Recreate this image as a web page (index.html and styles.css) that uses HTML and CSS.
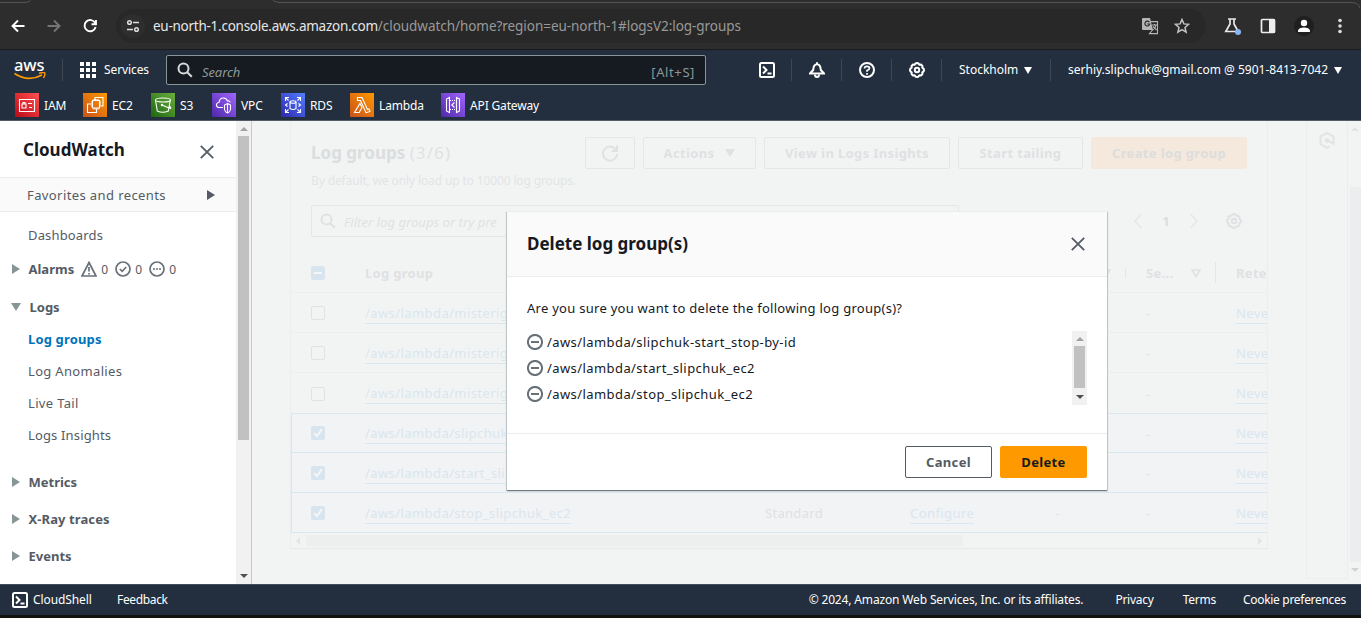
FILE: index.html
```html
<!DOCTYPE html>
<html lang="en">
<head>
<meta charset="utf-8">
<title>CloudWatch</title>
<link rel="stylesheet" href="styles.css">
</head>
<body>
<svg class="defs" aria-hidden="true">
  <symbol id="shell" viewBox="0 0 16 16"><rect x="1" y="1" width="14" height="14" rx="1.5"/><path d="M4 4.500 7.500 8 4 11.500M8.500 11.500h4"/></symbol>
  <symbol id="gear" viewBox="0 0 16 16"><path d="M6.600 1.400 8 1l1.400.4 1 1.300 1.600-.1 1.400 1.400-.1 1.600 1.300 1L15 8l-.4 1.400-1.300 1 .1 1.600-1.400 1.400-1.600-.1-1 1.300L8 15l-1.400-.4-1-1.300-1.600.1L2.600 12l.1-1.600-1.300-1L1 8l.4-1.400 1.300-1L2.600 4 4 2.600l1.600.1z"/><circle cx="8" cy="8" r="2.200"/></symbol>
  <symbol id="find" viewBox="0 0 16 16"><circle cx="6.500" cy="6.500" r="5"/><path d="m10.200 10.200 4.600 4.600"/></symbol>
  <symbol id="x" viewBox="0 0 14 14"><path d="M.8.8 13.200 13.200M13.200.8.8 13.200"/></symbol>
  <symbol id="tick" viewBox="0 0 14 14"><rect width="14" height="14" rx="2" fill="currentColor" stroke="none"/><path d="m3 7.300 3 2.900 5-7" stroke="#f4f6f7"/></symbol>
  <symbol id="minus" viewBox="0 0 16 16"><circle cx="8" cy="8" r="7.100"/><path d="M4 8h8"/></symbol>
</svg>

<header class="chrome">
  <svg class="tabline" width="1361" height="10"><path d="M0 2.500h24q7 0 7-4M272-1q2 3.500 7 3.500h1072q8 0 9 6" fill="none" stroke="#555"/></svg>
  <div class="navbtns">
    <svg width="16" height="16" viewBox="0 0 16 16" class="ln white"><path d="M14.500 8H3M8 2.500 2.500 8 8 13.500"/></svg>
    <svg width="16" height="16" viewBox="0 0 16 16" class="ln dim"><path d="M1.500 8H13M8 2.500 13.500 8 8 13.500"/></svg>
    <svg width="16" height="16" viewBox="0 0 16 16" class="ln white"><path d="M13.200 5.200A5.600 5.600 0 1 0 13.600 9M14 2v4.300H9.500"/></svg>
  </div>
  <div class="omni">
    <span class="tune"><svg width="14" height="14" viewBox="0 0 14 14" class="ln15 lt"><circle cx="3.500" cy="3.500" r="1.800"/><path d="M7 3.500h6M1 10.500h6"/><circle cx="10.500" cy="10.500" r="1.800"/></svg></span>
    <span class="url"><span class="domain">eu-north-1.console.aws.amazon.com</span><span class="path">/cloudwatch/home?region=eu-north-1#logsV2:log-groups</span></span>
    <svg class="translate" width="18" height="18" viewBox="0 0 18 18"><path d="M2 1h7l3 12H2a1 1 0 0 1-1-1V2a1 1 0 0 1 1-1z" fill="#b5b5b5"/><path d="M8.300 5.200A2.400 2.400 0 1 0 8.700 7H6.300" fill="none" stroke="#282828" stroke-width="1.200"/><path d="M10 4.600h6.500v12H8.500L11.500 13M11 8h5M13.500 7v1M15 8q-.5 3-3.500 5M12 9.500l3.500 3.500" fill="none" stroke="#b5b5b5" stroke-width="1.100"/></svg>
    <svg class="star" width="16" height="16" viewBox="0 0 16 16"><path d="m8 1.500 1.900 4.400 4.700.4-3.600 3.200 1.100 4.700L8 11.700l-4.100 2.500L5 9.500 1.400 6.300l4.700-.4z" fill="none" stroke="#c4c4c4" stroke-width="1.500"/></svg>
  </div>
  <div class="ext">
    <svg width="18" height="18" viewBox="0 0 18 18"><path d="M4 2h8M6 2v5L1.800 14.500h12.400L10 7V2" fill="none" stroke="#e8e8e8" stroke-width="1.700"/><circle cx="14" cy="15" r="3" fill="#8ab4f8"/></svg>
    <svg width="16" height="16" viewBox="0 0 16 16"><rect x="1.500" y="1.500" width="13" height="13" rx="1" fill="none" stroke="#eee" stroke-width="1.700"/><path d="M9 1.500h6v13H9z" fill="#eee"/></svg>
    <svg width="20" height="20" viewBox="0 0 20 20"><circle cx="10" cy="10" r="10" fill="#1f1f1f"/><circle cx="10" cy="7" r="3.200" fill="#fff"/><path d="M4 16v-1.500Q5 11.500 10 11.500t6 3V16z" fill="#fff"/></svg>
    <svg width="6" height="16" viewBox="0 0 6 16" fill="#ddd"><circle cx="3" cy="2.500" r="1.800"/><circle cx="3" cy="8" r="1.800"/><circle cx="3" cy="13.500" r="1.800"/></svg>
  </div>
</header>

<nav class="aws">
  <div class="top">
    <div class="logo"><span>aws</span><svg width="32" height="9" viewBox="0 0 32 9"><path d="M.5 1.500Q14 10.500 28 3" fill="none" stroke="#f90" stroke-width="1.800"/><path d="M25 1.200q5-1.200 5.800-.2t-1.300 5" fill="none" stroke="#f90" stroke-width="1.400"/></svg></div>
    <div class="services"><svg width="16" height="16" fill="#fff"><path d="M0 0h4v4H0zM6 0h4v4H6zM12 0h4v4h-4zM0 6h4v4H0zM6 6h4v4H6zM12 6h4v4h-4zM0 12h4v4H0zM6 12h4v4H6zM12 12h4v4h-4z"/></svg><span>Services</span></div>
    <div class="search"><svg width="16" height="16" class="ln"><use href="#find"/></svg><i>Search</i><span class="alt">[Alt+S]</span></div>
    <div class="tools">
      <span class="cell"><svg width="16" height="16" class="ln white"><use href="#shell"/></svg></span>
      <span class="cell"><svg width="16" height="16" viewBox="0 0 16 16" class="ln white"><path d="M1 11.500h14L11.800 8Q11.500 2.200 8 2.200T4.200 8zM8 .2v2"/><path d="M6 12.500q0 2.500 2 2.500t2-2.500"/></svg></span>
      <span class="cell"><svg width="16" height="16" viewBox="0 0 16 16" class="ln white"><circle cx="8" cy="8" r="7"/><path d="M5.500 6.500Q5.500 4.300 8 4.300t2.500 2Q10.500 7.500 8 8.500v1.200M8 11v1.700" stroke-width="1.700"/></svg></span>
      <span class="cell"><svg width="16" height="16" class="ln white"><use href="#gear"/></svg></span>
      <span class="region">Stockholm<b class="tri"></b></span>
      <span class="account">serhiy.slipchuk@gmail.com @ 5901-8413-7042<b class="tri"></b></span>
    </div>
  </div>
  <div class="favs">
    <span class="fav w68"><svg class="red" viewBox="0 0 24 24"><path d="M4.500 6.500h15v12h-15zM7 11h4v4H7zM8 11V9.500h2V11M13 10.500h4M14 14.500h3"/></svg><span>IAM</span></span>
    <span class="fav w68"><svg class="orange" viewBox="0 0 24 24"><path d="M8.500 11H4.500v8.500h9V16M12 7V4.500h8V13h-3M9.500 7.500h7v7.500h-7zM11 6v1.500M13 6v1.500M15 6v1.500M11 15v1.500M13 15v1.500M15 15v1.500M8 9h1.500M8 11h1.500M8 13h1.500M16.500 9H18M16.500 11H18"/></svg><span>EC2</span></span>
    <span class="fav w61"><svg class="green" viewBox="0 0 24 24"><ellipse cx="12" cy="7" rx="7.500" ry="2"/><path d="m4.500 7 1.800 11q5.500 2.500 11 0l2-11M11 12l7.500 3.300q3 .6-.5-2.300"/><circle cx="11" cy="12" r=".7"/></svg><span>S3</span></span>
    <span class="fav w69"><svg class="purple" viewBox="0 0 24 24"><path d="M11 14.500H6.500Q4 13.500 4.500 11.300 5.200 9.500 7 9.500 7.500 5 11.500 5q3 0 4 3 2.500-.5 2.700 1.500M15.500 10.500l3 1.500v4.500q-.5 2.500-3 3.500-2.500-1-3-3.500V12zM15.500 10.500V20"/></svg><span>VPC</span></span>
    <span class="fav w69"><svg class="blue" viewBox="0 0 24 24"><ellipse cx="12" cy="9" rx="3" ry="1.200"/><path d="M9 9v6.500q3 2 6 0V9M4.500 8V4.500H8M4.500 4.500l3 3M16 4.500h3.500V8M19.500 4.500l-3 3M4.500 16v3.500H8M4.500 19.500l3-3M16 19.500h3.500V16M19.500 19.500l-3-3M6.500 10.500 4.500 12l2 1.500M17.500 10.500l2 1.500-2 1.500"/></svg><span>RDS</span></span>
    <span class="fav w91"><svg class="orange" viewBox="0 0 24 24"><path d="M7.500 4.500H12l5.500 12 1.500-.5 1 2.500-4 1.200L10.500 7.500H7.500zM10 10.500l2 4-2.800 5H4.500z"/></svg><span>Lambda</span></span>
    <span class="fav"><svg class="purple" viewBox="0 0 24 24"><path d="m8.500 4.500-3 1.500v12l3 1.500zM15.500 4.500l3 1.500v12l-3 1.500zM13.500 9.500 10.800 12l2.700 2.500"/><path d="M9 7.500h6M9 16.500h6" stroke-dasharray="1 1"/></svg><span>API Gateway</span></span>
  </div>
</nav>

<div class="body">
  <aside class="side">
    <div class="sidehead"><h2>CloudWatch</h2><svg width="14" height="14" class="ln ink"><use href="#x"/></svg></div>
    <div class="favrow"><span>Favorites and recents</span><b class="rt dark"></b></div>
    <div class="item dash">Dashboards</div>
    <div class="item head alarms"><b class="rt"></b><span>Alarms</span>
      <svg width="16" height="16" viewBox="0 0 16 16" class="ln16"><path d="M8 1.500 15 15H1zM8 6v4.500M8 12v1.500"/></svg><em>0</em>
      <svg width="16" height="16" viewBox="0 0 16 16" class="ln16"><circle cx="8" cy="8" r="7"/><path d="m4.800 8 2.400 2.300 4-4.300"/></svg><em>0</em>
      <svg width="16" height="16" viewBox="0 0 16 16" class="ln16"><circle cx="8" cy="8" r="7"/><path d="M4 8h2M7 8h2M10 8h2"/></svg><em>0</em></div>
    <div class="item head logs"><b class="dn"></b><span>Logs</span></div>
    <div class="item active">Log groups</div>
    <div class="item anomalies">Log Anomalies</div>
    <div class="item tail">Live Tail</div>
    <div class="item">Logs Insights</div>
    <div class="item head tall first"><b class="rt"></b><span>Metrics</span></div>
    <div class="item head tall xray"><b class="rt"></b><span>X-Ray traces</span></div>
    <div class="item head tall"><b class="rt"></b><span>Events</span></div>
  </aside>
  <div class="vbar"><b class="up"></b><div class="thumb"></div><b class="down"></b></div>

  <main class="main">
    <section class="panel">
      <div class="phead">
        <div class="ptitle"><h1>Log groups <span>(3/6)</span></h1><p>By default, we only load up to 10000 log groups.</p></div>
        <div class="btns">
          <span class="gbtn refresh"><svg width="18" height="18" viewBox="0 0 18 18" class="ln"><path d="M15 6A7 7 0 1 0 16 10M16 1.500V7h-5.500"/></svg></span>
          <span class="gbtn actions">Actions<b class="tri"></b></span>
          <span class="gbtn view">View in Logs Insights</span>
          <span class="gbtn start">Start tailing</span>
          <span class="gbtn create">Create log group</span>
        </div>
      </div>
      <div class="filters">
        <div class="filter"><svg width="16" height="16" class="ln"><use href="#find"/></svg><i>Filter log groups or try pre</i></div>
        <div class="pager"><svg width="8" height="16" viewBox="0 0 8 16" class="ln15"><path d="M7.500 1 1 8l6.500 7"/></svg><b>1</b><svg width="8" height="16" viewBox="0 0 8 16" class="ln15"><path d="M.5 1 7 8 .5 15"/></svg><svg width="16" height="16" class="ln cog"><use href="#gear"/></svg></div>
      </div>
      <div class="row th"><span class="ck"><svg width="14" height="14" viewBox="0 0 14 14"><rect width="14" height="14" rx="2" fill="#d8e5ee"/><path d="M3 7h8" stroke="#f4f6f7" stroke-width="2"/></svg></span><span>Log group</span><span></span><span></span><span class="dv"><svg width="10" height="9" viewBox="0 0 10 9" class="ln15"><path d="M1 1h8L5 7.500z"/></svg></span><span class="dv">Se...<svg width="10" height="9" viewBox="0 0 10 9" class="ln15"><path d="M1 1h8L5 7.500z"/></svg></span><span>Reter</span></div>
      <div class="row"><span class="ck"><i class="box"></i></span><span><a>/aws/lambda/misterig</a></span><span></span><span></span><span></span><span>-</span><span><a>Never</a></span></div>
      <div class="row"><span class="ck"><i class="box"></i></span><span><a>/aws/lambda/misterig</a></span><span></span><span></span><span></span><span>-</span><span><a>Never</a></span></div>
      <div class="row last"><span class="ck"><i class="box"></i></span><span><a>/aws/lambda/misterig</a></span><span></span><span></span><span></span><span>-</span><span><a>Never</a></span></div>
      <div class="row sel short"><span class="ck"><svg width="14" height="14" class="ln"><use href="#tick"/></svg></span><span><a>/aws/lambda/slipchuk</a></span><span></span><span></span><span></span><span>-</span><span><a>Never</a></span></div>
      <div class="row sel"><span class="ck"><svg width="14" height="14" class="ln"><use href="#tick"/></svg></span><span><a>/aws/lambda/start_slip</a></span><span></span><span></span><span></span><span>-</span><span><a>Never</a></span></div>
      <div class="row sel"><span class="ck"><svg width="14" height="14" class="ln"><use href="#tick"/></svg></span><span><a>/aws/lambda/stop_slipchuk_ec2</a></span><span>Standard</span><span><a>Configure</a></span><span>-</span><span>-</span><span><a>Never</a></span></div>
      <div class="hbar"><b class="lf"></b><div></div><b class="rg"></b></div>
    </section>
    <div class="rail"><svg width="16" height="17" viewBox="0 0 16 17" class="ln"><path d="m10.500 14.400-2.500 1.400-6.500-3.700V4.700L8 1l6.500 3.700v7L8.500 8.500"/><circle cx="8" cy="8.500" r="1.300"/></svg></div>
    <div class="vbar faded"><b class="up"></b><div class="thumb"></div><b class="down"></b></div>
  </main>

  <div class="modal" role="dialog">
    <div class="mhead"><h2>Delete log group(s)</h2><svg width="14" height="14" class="ln ink"><use href="#x"/></svg></div>
    <div class="mbody">
      <p>Are you sure you want to delete the following log group(s)?</p>
      <div class="list">
        <ul>
          <li><svg width="16" height="16" class="ln"><use href="#minus"/></svg><span>/aws/lambda/slipchuk-start_stop-by-id</span></li>
          <li><svg width="16" height="16" class="ln"><use href="#minus"/></svg><span>/aws/lambda/start_slipchuk_ec2</span></li>
          <li><svg width="16" height="16" class="ln"><use href="#minus"/></svg><span>/aws/lambda/stop_slipchuk_ec2</span></li>
        </ul>
        <div class="vbar small"><b class="up"></b><div class="thumb"></div><b class="down"></b></div>
      </div>
    </div>
    <div class="mfoot"><button>Cancel</button><button class="primary">Delete</button></div>
  </div>
</div>

<footer class="foot">
  <svg width="16" height="16" class="ln white"><use href="#shell"/></svg><span class="cs">CloudShell</span><span class="fb">Feedback</span>
  <span class="copy">© 2024, Amazon Web Services, Inc. or its affiliates.</span><span class="priv">Privacy</span><span class="terms">Terms</span><span class="cookie">Cookie preferences</span>
</footer>
</body>
</html>
```

FILE: styles.css
```css
*{box-sizing:border-box}
body{margin:0;width:1361px;height:618px;overflow:hidden;background:#12120f;font:13px/20px "Noto Sans",sans-serif;color:#16191f}
h1,h2,p,ul{margin:0;padding:0}
h1,h2{font-size:17px;line-height:22px;font-weight:700}
svg{flex:none;display:block}
.defs{position:absolute;width:0;height:0}
.ln,.ln15,.ln16{fill:none;stroke:currentColor;stroke-width:2}
.ln15{stroke-width:1.5}
.ln16{stroke-width:1.7}
.white{color:#fff}
.dim{color:#757575}
.lt{color:#ddd}
.ink{color:#545b64}

/* Browser toolbar */
.chrome{position:relative;height:50px;background:#2d2d2d;border-bottom:1px solid #191b1e;display:flex;align-items:center;padding-top:3px}
.tabline{position:absolute;left:0;top:0}
.navbtns{display:flex;gap:20px;padding-left:10px;width:116px}
.navbtns .ln{stroke-width:1.9}
.omni{width:1090px;height:34px;border-radius:17px;background:#282828;display:flex;align-items:center;padding-left:5px}
.tune{width:24px;height:24px;border-radius:12px;background:#2e2e2e;display:flex;align-items:center;justify-content:center}
.url{margin-left:8px;font-size:13.500px;color:#999;width:988px;white-space:nowrap}
.domain{color:#e6e6e6;letter-spacing:-.26px}
.path{letter-spacing:-.05px}
.translate{margin-right:15px}
.ext{display:flex;align-items:center;margin-left:18px}
.ext svg:nth-child(2){margin-left:18px}
.ext svg:nth-child(3){margin-left:18px}
.ext svg:nth-child(4){margin-left:23px}

/* Console navigation */
.aws{height:71px;background:#232f3e;color:#fff;font-size:12px;border-bottom:1px solid #545b64}
.top{display:flex;height:40px;align-items:center}
.logo{width:63px;height:22px;padding-left:14px;border-right:1px solid #414750}
.logo span{display:block;font-size:16.500px;line-height:13px;height:13px;font-weight:500;letter-spacing:-.1px;margin-top:-1px}
.logo svg{margin-top:1px}
.services{display:flex;align-items:center;gap:8px;width:103px;padding-left:17px;letter-spacing:-.1px;height:20px}
.search{width:540px;height:30px;border:1px solid #879596;border-radius:2px;background:#161a21;display:flex;align-items:center;padding:0 10px;font-size:13px;color:#8c9899}
.search svg{color:#d5dbdb}
.search i{margin-left:9px;padding-top:3px;letter-spacing:-.1px}
.alt{margin-left:auto;padding-top:3px;letter-spacing:.6px}
.tools{display:flex;margin-left:36px;align-items:center;white-space:nowrap}
.cell{width:50px;height:22px;display:flex;align-items:center;justify-content:center;border-right:1px solid #414750}
.region{width:109px;padding-left:17px;border-right:1px solid #414750;height:22px;line-height:22px;display:flex;align-items:center}
.account{padding-left:17px;display:flex;align-items:center}
.tri{display:block;border:4.500px solid transparent;border-top:7px solid currentColor;border-bottom:0;margin-left:6px}
.favs{display:flex;height:30px;align-items:center;padding-left:15px}
.fav{display:flex;gap:5px;align-items:center;letter-spacing:-.15px}
.fav span{padding-top:1px}
.fav svg{width:24px;height:24px;fill:none;stroke:#fff;stroke-width:1.100}
.w68{width:68px}.w61{width:61px}.w69{width:69px}.w91{width:91px}
.red{background:linear-gradient(45deg,#bd0816,#ff5252)}
.orange{background:linear-gradient(45deg,#c8511b,#f90)}
.green{background:linear-gradient(45deg,#1b660f,#6cae3e)}
.purple{background:linear-gradient(45deg,#4d27a8,#a166ff)}
.blue{background:linear-gradient(45deg,#2e27ad,#527fff)}

/* Content area */
.body{position:relative;height:463px;display:flex;background:#f2f4f4;overflow:hidden}
.side{width:236px;background:#fff;color:#545b64;overflow:hidden;flex:none}
.sidehead{height:56px;display:flex;justify-content:space-between;padding:18px 22px 0 23px;color:#16191f}
.sidehead svg{margin-top:6px;stroke-width:1.800}
.favrow{height:35px;border:solid #eaeded;border-width:1px 0;background:#fafafa;display:flex;align-items:center;justify-content:space-between;padding:0 21px 0 27px;letter-spacing:.4px}
.rt{display:block;border:5px solid transparent;border-left:8px solid #879596;border-right:0}
.rt.dark{border-left-color:#545b64}
.dn{display:block;border:5px solid transparent;border-top:8px solid #879596;border-bottom:0;margin-left:-1px}
.item{height:32px;line-height:32px;padding-left:28px;letter-spacing:.15px}
.dash{margin-top:7px}
.head{display:flex;align-items:center;padding-left:12px;font-weight:700}
.head .rt{margin-right:8.500px}
.head .dn{margin-right:8.500px}
.head span{letter-spacing:0}
.alarms{height:34px;margin-top:1px}
.alarms svg{margin-left:7px;color:#687078}
.alarms em{font:12px "Noto Sans",sans-serif;width:7px;margin:1px 0 0 4px}
.logs{margin-top:5px}
.active{color:#0073bb;font-weight:700}
.anomalies,.tail{letter-spacing:.33px}
.tall{height:37px}
.first{margin-top:12px}
.xray span{letter-spacing:.1px}
.vbar{width:16px;flex:none;background:#f1f1f1;border-right:1px solid #c5cccd;display:flex;flex-direction:column;align-items:center;padding:6px 0 6px}
.vbar .up{border:4px solid transparent;border-bottom:4px solid #a3a3a3;border-top:0}
.vbar .down{border:4px solid transparent;border-top:4px solid #505050;border-bottom:0;margin-top:auto}
.thumb{width:11px;background:#c1c1c1;height:304px;margin-top:5px}

/* Faded page behind the dialog */
.main{flex:1;display:flex;color:#dfe1e2}
.panel{width:978px;height:428px;margin-left:38px;border:1px solid #ebedee;border-top:0;border-bottom-color:#e6e9e9;overflow:hidden;flex:none}
.phead{display:flex;justify-content:space-between;padding:16px 20px 0 20px;height:84px;white-space:nowrap}
.ptitle h1{margin-top:5px;color:#dbddde}
.ptitle h1 span{font-weight:400;letter-spacing:1.100px;color:#e0e2e3}
.ptitle p{font-size:12px;letter-spacing:-.13px;margin-top:7px;color:#e2e4e5}
.btns{display:flex;gap:8px}
.gbtn{height:32px;border:1px solid #e4e6e7;border-radius:2px;display:flex;align-items:center;justify-content:center;font-weight:700;letter-spacing:.36px;white-space:nowrap}
.gbtn .tri{margin-left:11px;border-width:5px;border-top-width:8px;border-bottom:0}
.refresh{width:50px}.actions{width:113px}.view{width:186px}.start{width:125px}
.create{width:156px;background:#f4e9dc;border-color:#f4e9dc;color:#dcdddd}
.filters{display:flex;padding-left:20px;height:45px}
.filter{width:648px;height:32px;border:1px solid #e4e6e7;border-radius:2px;display:flex;align-items:center;padding:0 8px;letter-spacing:.05px}
.filter i{margin-left:8px;padding-top:2px}
.pager{display:flex;align-items:center;height:32px;padding-left:175px;color:#e4e6e7}
.pager b{width:48px;text-align:center;color:#dbddde}
.pager .cog{margin-left:28px;color:#dfe1e2}
.row{display:grid;grid-template-columns:54px 400px 145px 145px 91px 90px 145px;height:40px;align-items:center;border-bottom:1px solid #edefef;letter-spacing:.3px;width:1070px}
.row > span{padding-left:20px;padding-top:1px;white-space:nowrap}
.row a{display:inline-block;height:20px;line-height:18px;border-bottom:1px solid #d8e7f0;color:#dae6ef;letter-spacing:.42px}
.row > .ck{padding-left:20px;padding-top:0}
.th{height:43px;font-weight:700;padding-top:3px}
.th .dv{display:flex;align-items:center;justify-content:space-between;border-right:1px solid #e4e6e7;padding-right:14px}
.th .dv svg:first-child{margin-left:auto}
.box{display:block;width:14px;height:14px;border:1px solid #e0e3e4;border-radius:2px}
.row.last{border-bottom-color:#d9e7ee;height:41px}
.row.last > .ck{padding-top:1px}
.row.sel{grid-template-columns:53px 400px 145px 145px 91px 90px 145px;background:#f1f3f5;border-bottom-color:#d9e7ee;border-left:1px solid #d9e7ee}
.row.sel > .ck{padding-left:19px}
.row.short{height:39px}
.sel .ck{color:#d8e5ee}
.hbar{display:flex;align-items:center;padding:0 5px;gap:6px;height:15px}
.hbar div{width:657px;height:11px;background:#edeeee}
.lf{border:4px solid transparent;border-right:4px solid #e3e5e5;border-left:0}
.rg{border:4px solid transparent;border-left:4px solid #e3e5e5;border-right:0;margin-left:auto}
.rail{width:42px;margin-left:38px;border:1px solid #eceeee;border-top:0;height:458px;padding:11px 0 0 12px;color:#e1e3e4}
.vbar.faded{width:12px;margin-left:1px;background:#f2f3f3;border:0;padding-bottom:12px}
.faded .thumb{height:375px;margin-top:56px;background:#ecedee}
.faded .up,.faded .down{opacity:.2}

/* Dialog */
.modal{position:absolute;left:507px;top:90px;width:600px;height:279px;background:#fff;box-shadow:0 1px 1px #6f7b7d,1px 1px 1px #cdd4d5,-1px 1px 1px #cdd4d5;border-top:1px solid #eaeded;display:flex;flex-direction:column}
.mhead{height:65px;background:#fafafa;border-bottom:1px solid #eaeded;display:flex;justify-content:space-between;padding:21px 22px 0 20px}
.mhead svg{margin-top:4px;stroke-width:1.800}
.mbody{height:156px;padding:21px 20px 0;letter-spacing:.27px}
.list{display:flex;justify-content:space-between;margin-top:13px}
ul{list-style:none;letter-spacing:.42px}
li{display:flex;gap:4px;height:26px;padding-top:1px}
li svg{margin-top:2px;color:#687078}
.vbar.small{width:15px;height:74px;border:0}
.small .thumb{height:42px;margin-top:5px}
.mfoot{height:57px;border-top:1px solid #eaeded;display:flex;justify-content:flex-end;gap:8px;padding:12px 20px 0}
button{width:87px;height:32px;padding:0;border:1px solid #545b64;border-radius:2px;background:#fff;color:#545b64;font:700 13px "Noto Sans",sans-serif;letter-spacing:.36px}
.primary{background:#f90;border-color:#f90;color:#16191f}

/* Footer */
.foot{height:31px;background:#232f3e;border-top:1px solid #414d5c;color:#fff;font-size:12px;display:flex;align-items:center;padding:0 15px 0 12px;white-space:nowrap}
.foot span{margin-top:-1px}
.foot .cs{margin-left:5px;width:84px;letter-spacing:-.1px}
.foot .fb{letter-spacing:-.35px}
.foot .copy{margin-left:auto;letter-spacing:-.15px}
.foot .priv{margin-left:32px;letter-spacing:-.25px}
.foot .terms{margin-left:29px;letter-spacing:-.25px}
.foot .cookie{margin-left:27px;letter-spacing:-.3px}
```
